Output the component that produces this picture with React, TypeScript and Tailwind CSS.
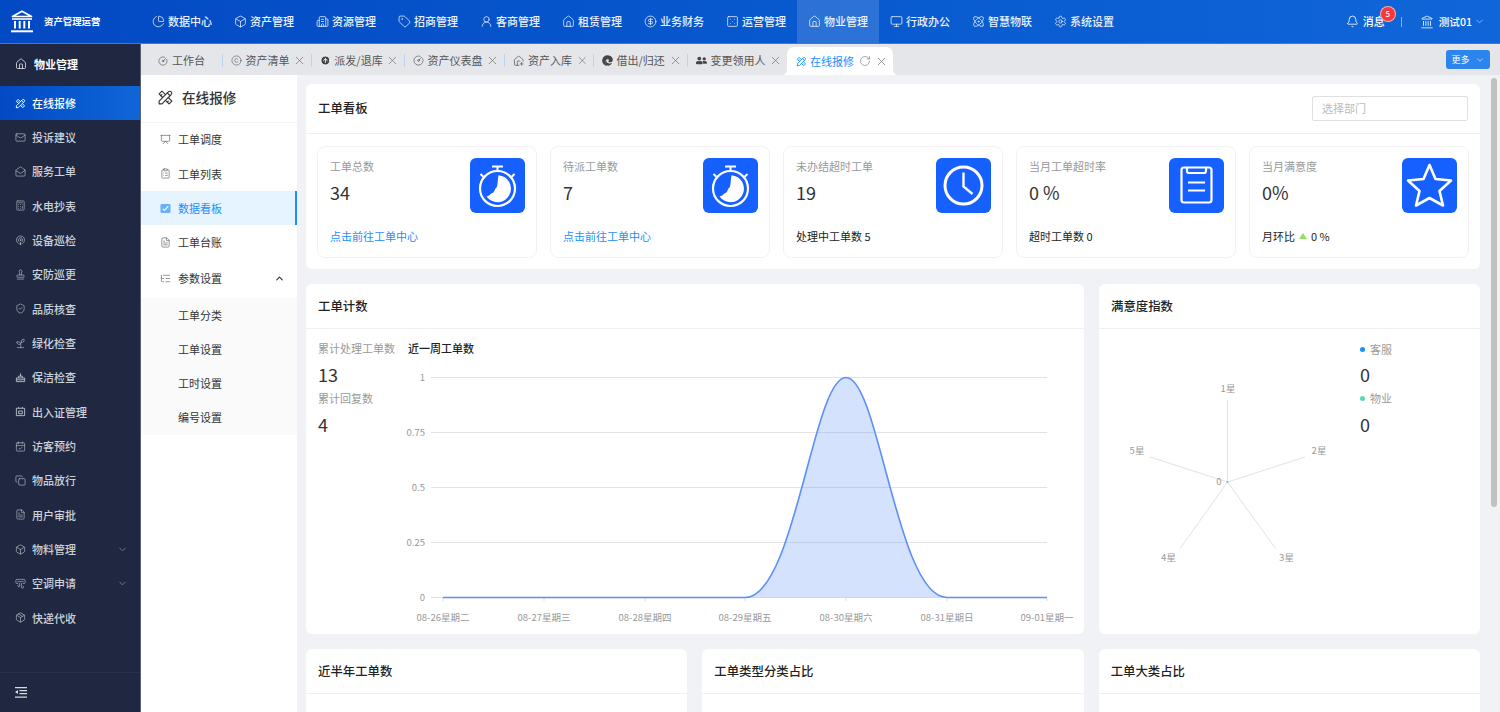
import React from 'react';
import {
  AirVent, Atom, Bell, Box, Building2, Calculator, CalendarCheck, ChevronDown, ChevronUp, ChartPie, CircleArrowUp,
  CircleDollarSign, CircleGauge, ClipboardList, Copy, Copyright, Dice5, FileText, House, HousePlus, Landmark, ListTree,
  Mail, MailOpen, Monitor, Package, Podcast, Presentation, RotateCw, Settings, ShieldCheck, Sprout, Stamp, Tag,
  UserRound, X,
} from 'lucide-react';
import { TbTools } from 'react-icons/tb';
import { FaEdge, FaUserFriends } from 'react-icons/fa';

type IconProps = { size?: number; strokeWidth?: number; className?: string };

const BroomBox = ({ size = 11, className }: IconProps) => (
  <svg viewBox="0 0 12 12" width={size} height={size} fill="none" stroke="currentColor" strokeWidth="1" className={className}>
    <path d="M1.5 6.5h9v4h-9zM4 6.5V4.5h4v2M6 4.5V1.5M1.5 8.5h9" />
  </svg>
);

const PassIcon = ({ size = 11, className }: IconProps) => (
  <svg viewBox="0 0 12 12" width={size} height={size} fill="none" stroke="currentColor" strokeWidth="1" className={className}>
    <path d="M1.5 2.5h9v8h-9zM4 2.5V1M8 2.5V1M4 5.5h4v3H4z" />
  </svg>
);

const BoardIcon = ({ size = 11, className }: IconProps) => (
  <svg viewBox="0 0 12 12" width={size} height={size} className={className}>
    <rect x="0.5" y="1" width="11" height="10" rx="1.5" fill="#69b1ff" />
    <path d="M3 6.5L5 8L9 3.5" fill="none" stroke="#fff" strokeWidth="1.2" />
  </svg>
);

const navItems = [
  { label: '数据中心', icon: ChartPie },
  { label: '资产管理', icon: Box },
  { label: '资源管理', icon: Building2 },
  { label: '招商管理', icon: Tag },
  { label: '客商管理', icon: UserRound },
  { label: '租赁管理', icon: House },
  { label: '业务财务', icon: CircleDollarSign },
  { label: '运营管理', icon: Dice5 },
  { label: '物业管理', icon: House, active: true },
  { label: '行政办公', icon: Monitor },
  { label: '智慧物联', icon: Atom },
  { label: '系统设置', icon: Settings },
];

const sideItems = [
  { label: '投诉建议', icon: Mail },
  { label: '服务工单', icon: MailOpen },
  { label: '水电抄表', icon: Calculator },
  { label: '设备巡检', icon: Podcast },
  { label: '安防巡更', icon: Stamp },
  { label: '品质核查', icon: ShieldCheck },
  { label: '绿化检查', icon: Sprout },
  { label: '保洁检查', icon: BroomBox },
  { label: '出入证管理', icon: PassIcon },
  { label: '访客预约', icon: CalendarCheck },
  { label: '物品放行', icon: Copy },
  { label: '用户审批', icon: FileText },
  { label: '物料管理', icon: Box, more: true },
  { label: '空调申请', icon: AirVent, more: true },
  { label: '快递代收', icon: Package },
];

const tabs = [
  { label: '资产清单', icon: <Copyright size={11} strokeWidth={1.3} />, w: 'w-[89px]' },
  { label: '派发/退库', icon: <CircleArrowUp size={11} fill="#444" stroke="#fff" strokeWidth={2} />, w: 'w-[93px]' },
  { label: '资产仪表盘', icon: <CircleGauge size={11} strokeWidth={1.4} />, w: 'w-[100px]' },
  { label: '资产入库', icon: <HousePlus size={12} strokeWidth={1.5} />, w: 'w-[89px]' },
  { label: '借出/归还', icon: <FaEdge size={11} color="#444" />, w: 'w-[94px]' },
  { label: '变更领用人', icon: <FaUserFriends size={11} color="#444" />, w: 'w-[100px]' },
];

const subMenu = [
  { label: '工单调度', icon: Presentation },
  { label: '工单列表', icon: ClipboardList },
  { label: '数据看板', icon: BoardIcon, active: true },
  { label: '工单台账', icon: FileText },
];

const Logo = () => (
  <svg viewBox="0 0 24 23" className="w-[24px] h-[23px]" fill="none" stroke="#fff">
    <path d="M12 1.2L21.5 6.5H2.5Z" strokeWidth="1.7" strokeLinejoin="round" />
    <path d="M2 9H22" strokeWidth="1.6" />
    <path d="M5 11V18.5M9.7 11V18.5M14.3 11V18.5M19 11V18.5" strokeWidth="2" />
    <path d="M1 21.3H23" strokeWidth="2" />
  </svg>
);

const Stopwatch = () => (
  <svg viewBox="0 0 55 55" className="w-[55px] h-[55px]">
    <circle cx="27.5" cy="30.5" r="17.5" fill="none" stroke="#fff" strokeWidth="2.2" />
    <path d="M22 8.5h11M27.5 8.5v4M10.5 16l2.8 2.8M44.5 16l-2.8 2.8" stroke="#fff" strokeWidth="2" fill="none" />
    <path d="M28.5 17.2A13.5 13.5 0 1 1 16.5 38.5C19 38.5 20.5 35.5 22.5 35C24.5 34 24.5 31 26.5 29.5C28 27 27.5 22 28.5 17.2Z" fill="#fff" />
  </svg>
);

const ClockIcon = () => (
  <svg viewBox="0 0 55 55" className="w-[55px] h-[55px]">
    <circle cx="27.5" cy="27.5" r="18.5" fill="none" stroke="#fff" strokeWidth="3" />
    <path d="M27.5 14.5V28.5L36.5 36" fill="none" stroke="#fff" strokeWidth="2.4" />
  </svg>
);

const ClipIcon = () => (
  <svg viewBox="0 0 55 55" className="w-[55px] h-[55px]">
    <rect x="12.5" y="9.5" width="30" height="35" rx="2.5" fill="none" stroke="#fff" strokeWidth="2.2" />
    <path d="M18 9.5V13Q18 15 20 15H35Q37 15 37 13V9.5M19 24.5H36M19 32.5H36" fill="none" stroke="#fff" strokeWidth="2.2" />
  </svg>
);

const StarIcon = () => (
  <svg viewBox="0 0 55 55" className="w-[55px] h-[55px]">
    <path d="M27.5 7L33.5 21L49 22.5L37.5 33L41 47.5L27.5 40L14 47.5L17.5 33L6 22.5L21.5 21Z" fill="none" stroke="#fff" strokeWidth="2.6" strokeLinejoin="round" />
  </svg>
);

const link = '点击前往工单中心';

const stats = [
  { label: '工单总数', value: '34', icon: <Stopwatch />, foot: <span className="text-[#1890ff]">{link}</span> },
  { label: '待派工单数', value: '7', icon: <Stopwatch />, foot: <span className="text-[#1890ff]">{link}</span> },
  { label: '未办结超时工单', value: '19', icon: <ClockIcon />, foot: <span className="text-[#222]">处理中工单数 5</span> },
  { label: '当月工单超时率', value: '0 %', icon: <ClipIcon />, foot: <span className="text-[#222]">超时工单数 0</span> },
  {
    label: '当月满意度', value: '0%', icon: <StarIcon />,
    foot: (
      <span className="flex items-center text-[#222]">
        月环比
        <svg viewBox="0 0 8 6" className="w-[8px] h-[6px] mx-[4px]"><path d="M4 0L8 6H0Z" fill="#95de64" /></svg>
        0 %
      </span>
    ),
  },
];

const PanelHead = ({ title, tall, children }: { title: string; tall?: boolean; children?: React.ReactNode }) => (
  <div className={`flex items-center justify-between px-[12px] border-b border-[#f0f0f0] ${tall ? 'h-[50px]' : 'h-[45px]'}`}>
    <span className="text-[12.4px] font-medium text-[#222]">{title}</span>
    {children}
  </div>
);

const yTicks = [
  { y: 377, t: '1' },
  { y: 432, t: '0.75' },
  { y: 487, t: '0.5' },
  { y: 542, t: '0.25' },
  { y: 597, t: '0' },
];

const xTicks = [
  { x: 443, t: '08-26星期二' },
  { x: 544, t: '08-27星期三' },
  { x: 645, t: '08-28星期四' },
  { x: 745, t: '08-29星期五' },
  { x: 846, t: '08-30星期六' },
  { x: 947, t: '08-31星期日' },
  { x: 1047, t: '09-01星期一' },
];

// 图表坐标直接按页面像素算，viewBox 从面板左上角开始
const LineChart = () => (
  <svg viewBox="400 360 684 270" className="w-[684px] h-[270px] mt-[4px]">
    {yTicks.map((l) => (
      <g key={l.t}>
        <line x1="431" x2="1047" y1={l.y + 0.5} y2={l.y + 0.5} stroke="#e3e3e3" />
        <text x="425" y={l.y + 3.5} textAnchor="end" fontSize="9.5" fill="#999">{l.t}</text>
      </g>
    ))}
    {xTicks.map((l) => (
      <g key={l.t}>
        <line x1={l.x} x2={l.x} y1="598" y2="601" stroke="#ddd" />
        <text x={l.x} y="621" textAnchor="middle" fontSize="9.5" fill="#999">{l.t}</text>
      </g>
    ))}
    <path d="M745 597.5C795 597.5 813 377.5 846 377.5C879 377.5 897 597.5 947 597.5Z" fill="#5b8ff9" fillOpacity="0.26" />
    <path d="M443 597.5H745C795 597.5 813 377.5 846 377.5C879 377.5 897 597.5 947 597.5H1047" fill="none" stroke="#5b8ff9" strokeWidth="1.6" />
  </svg>
);

const radarLabels = [
  { x: 1228, y: 391, t: '1星', ex: 1227.5, ey: 399 },
  { x: 1319, y: 453, t: '2星', ex: 1305, ey: 456 },
  { x: 1286.5, y: 560, t: '3星', ex: 1275.7, ey: 547.7 },
  { x: 1168.5, y: 560, t: '4星', ex: 1180, ey: 547.7 },
  { x: 1137, y: 453, t: '5星', ex: 1150, ey: 456 },
];

const Radar = () => (
  <svg viewBox="1100 370 240 200" className="w-[240px] h-[200px]">
    {radarLabels.map((l) => (
      <g key={l.t}>
        <line x1="1227.5" y1="481" x2={l.ex} y2={l.ey} stroke="#e2e2e2" />
        <text x={l.x} y={l.y} textAnchor="middle" fontSize="9.5" fill="#999">{l.t}</text>
      </g>
    ))}
    <text x="1219" y="484" textAnchor="middle" fontSize="9.5" fill="#999">0</text>
    <circle cx="1227.5" cy="481" r="1" fill="#5ad8a6" />
  </svg>
);

const App: React.FC = () => {
  return (
    <div className="h-screen flex flex-col overflow-hidden relative text-[11px] text-[#333] font-['Noto_Sans_CJK_SC','Noto_Sans',sans-serif]">
      {/* 顶部导航 */}
      <header className="h-[44px] shrink-0 flex items-center bg-gradient-to-r from-[#0349c3] to-[#1066d8] border-b border-[#2f7de6] text-white">
        <div className="w-[141px] flex items-center shrink-0 pl-[10px]">
          <Logo />
          <span className="ml-[10px] text-[9.4px] font-bold">资产管理运营</span>
        </div>
        <nav className="flex h-full">
          {navItems.map((n) => (
            <div key={n.label} className={`w-[82px] flex items-center justify-center gap-[3px] ${n.active ? 'bg-white/15' : ''}`}>
              <n.icon size={13} strokeWidth={1.3} />
              <span className="font-medium text-[#eaf1fc]">{n.label}</span>
            </div>
          ))}
        </nav>
        <div className="ml-auto flex items-center pr-[15px]">
          <Bell size={13} strokeWidth={1.5} />
          <div className="relative ml-[4px] font-medium">
            消息
            <span className="absolute -top-[7px] left-[17px] w-[16px] h-[16px] rounded-full bg-[#f5383b] border border-white/60 flex items-center justify-center text-[8px]">5</span>
          </div>
          <span className="ml-[16px] w-px h-[10px] bg-white/50" />
          <Landmark size={14} strokeWidth={1.4} className="ml-[18px]" />
          <span className="ml-[5px] font-medium text-[10.6px]">测试01</span>
          <ChevronDown size={11} strokeWidth={1.5} className="ml-[2px] text-white/70" />
        </div>
      </header>

      <div className="flex-1 flex min-h-0">
        {/* 左侧一级菜单 */}
        <aside className="w-[141px] shrink-0 flex flex-col bg-[#1f2840] border-r border-[#5a6272] text-[#ccd1da]">
          <div className="h-[42px] pb-[2px] flex items-center pl-[15px] gap-[7px] text-white font-bold">
            <House size={12} strokeWidth={1.4} />
            物业管理
          </div>
          <div className="h-[34px] flex items-center pl-[15px] gap-[6px] text-white font-medium bg-gradient-to-r from-[#0349c3] to-[#1066d8]">
            <TbTools size={11} />
            在线报修
          </div>
          {sideItems.map((s) => (
            <div key={s.label} className="h-[34.35px] shrink-0 flex items-center pl-[15px] pr-[12px] gap-[6px] font-medium">
              <s.icon size={11} strokeWidth={1.4} className="text-[#b9bfca]" />
              {s.label}
              {s.more && <ChevronDown size={11} className="ml-auto text-[#77808f]" />}
            </div>
          ))}
          <div className="mt-auto h-[40px] flex items-center pl-[15px] border-t border-[#283149]">
            <svg viewBox="0 0 12 11" className="w-[12px] h-[11px]" fill="#d5d9e0">
              <path d="M0 0h12v1.2H0zM4.5 3h7.5v1.2H4.5zM4.5 6h7.5v1.2H4.5zM0 9.6h12v1.2H0zM3 3v4L0 5z" />
            </svg>
          </div>
        </aside>

        <div className="flex-1 flex flex-col min-w-0">
          {/* 标签页 */}
          <div className="h-[31px] shrink-0 flex items-end bg-[#e4e6e9] relative text-[#555]">
            <div className="h-[27px] w-[81px] flex items-center pl-[17px] gap-[4px] mb-[1px]">
              <CircleGauge size={10} strokeWidth={1.5} />
              工作台
            </div>
            {tabs.map((t) => (
              <div key={t.label} className={`${t.w} h-[27px] mb-[1px] flex items-center pl-[9px] pr-[5px] gap-[3.5px] relative before:content-[''] before:absolute before:left-0 before:top-[7px] before:h-[13px] before:w-px before:bg-[#bfd3ee]`}>
                {t.icon}
                <span className="whitespace-nowrap">{t.label}</span>
                <X size={13} strokeWidth={1.4} className="ml-auto text-[#777]" />
              </div>
            ))}
            <div className="relative h-[28px] w-[106px] bg-white rounded-t-[7px] flex items-center pl-[9px] pr-[5px] gap-[3px] text-[#1890ff]">
              <svg viewBox="0 0 6 6" className="absolute -left-[6px] bottom-0 w-[6px] h-[6px]"><path d="M6 0V6H0Q6 6 6 0Z" fill="#fff" /></svg>
              <svg viewBox="0 0 6 6" className="absolute -right-[6px] bottom-0 w-[6px] h-[6px]"><path d="M0 0V6H6Q0 6 0 0Z" fill="#fff" /></svg>
              <TbTools size={11} />
              在线报修
              <RotateCw size={12} strokeWidth={1.1} className="ml-[2px] text-[#666]" />
              <X size={13} strokeWidth={1.4} className="ml-auto text-[#777]" />
            </div>
            <div className="absolute right-[10px] top-[6px] w-[44px] h-[19px] rounded-[3px] bg-[#2b85ec] text-white text-[9px] flex items-center justify-center gap-[5px]">
              更多
              <ChevronDown size={10} className="text-white/70" />
            </div>
          </div>

          <div className="flex-1 flex min-h-0">
            {/* 二级菜单 */}
            <div className="w-[156px] shrink-0 bg-white flex flex-col">
              <div className="h-[47.5px] shrink-0 pb-[2px] flex items-center pl-[16px] gap-[8px] border-b border-[#f3f3f3] text-[13.6px] font-medium text-[#333]">
                <TbTools size={17} strokeWidth={1.6} />
                在线报修
              </div>
              {subMenu.map((m) => (
                <div key={m.label} className={`h-[34.3px] flex items-center pl-[19px] gap-[7px] ${m.active ? 'bg-[#e6f4ff] text-[#1890ff] border-r-2 border-[#1890ff]' : ''}`}>
                  <m.icon size={11} strokeWidth={1.5} className={m.active ? 'text-[#69b1ff]' : 'text-[#666]'} />
                  {m.label}
                </div>
              ))}
              <div className="h-[38px] flex items-center pl-[19px] pr-[12px] gap-[7px]">
                <ListTree size={11} strokeWidth={1.5} className="text-[#666]" />
                参数设置
                <ChevronUp size={11} strokeWidth={2.5} className="ml-auto" />
              </div>
              <div className="bg-[#fafafa]">
                {['工单分类', '工单设置', '工时设置', '编号设置'].map((s) => (
                  <div key={s} className="h-[34.3px] flex items-center pl-[37px]">{s}</div>
                ))}
              </div>
            </div>

            {/* 内容区 */}
            <main className="flex-1 min-w-0 overflow-hidden bg-[#f0f2f5] pl-[9px] pr-[20px] pt-[9px] flex flex-col gap-[15px]">
              <section className="bg-white rounded-[6px] shrink-0">
                <PanelHead title="工单看板" tall>
                  <div className="w-[156px] h-[25px] border border-[#e0e0e0] rounded-[2px] flex items-center pl-[9px] text-[#bbb]">选择部门</div>
                </PanelHead>
                <div className="grid grid-cols-5 gap-[13px] px-[11px] pt-[12px] pb-[11px]">
                  {stats.map((s) => (
                    <div key={s.label} className="h-[112px] rounded-[8px] border border-[#f2f2f2] pl-[12px] pr-[11px] pt-[11px] flex flex-col relative">
                      <div className="flex justify-between">
                        <div>
                          <div className="text-[#999] leading-[16px]">{s.label}</div>
                          <div className="text-[18px] leading-[24px] mt-[6px] text-[#333]">{s.value}</div>
                        </div>
                        <div className="w-[55px] h-[55px] rounded-[6px] bg-[#1660ff] shrink-0">{s.icon}</div>
                      </div>
                      <div className="mt-auto mb-[13px] leading-[16px]">{s.foot}</div>
                    </div>
                  ))}
                </div>
              </section>

              <div className="flex gap-[15px] shrink-0">
                <section className="w-[778px] h-[350px] bg-white rounded-[6px]">
                  <PanelHead title="工单计数" />
                  <div className="flex">
                    <div className="w-[102px] pl-[12px] pt-[11px] shrink-0">
                      <div className="text-[#999] leading-[16px] whitespace-nowrap">累计处理工单数</div>
                      <div className="text-[18px] leading-[24px] mt-[6px]">13</div>
                      <div className="text-[#999] leading-[16px] mt-[4px]">累计回复数</div>
                      <div className="text-[18px] leading-[24px] mt-[6px]">4</div>
                    </div>
                    <div className="pt-[11px] -ml-[8px] flex flex-col">
                      <div className="pl-[8px] leading-[16px] font-medium text-[#222]">近一周工单数</div>
                      <LineChart />
                    </div>
                  </div>
                </section>
                <section className="flex-1 h-[350px] bg-white rounded-[6px]">
                  <PanelHead title="满意度指数" />
                  <div className="flex">
                    <div className="w-[261px] pt-[42px] pl-[1px] shrink-0"><Radar /></div>
                    <div className="pt-[12px]">
                      <div className="flex items-center gap-[5px] text-[#999] leading-[16px]">
                        <span className="w-[5px] h-[5px] rounded-full bg-[#1890ff]" />
                        客服
                      </div>
                      <div className="text-[18px] leading-[24px] mt-[5px]">0</div>
                      <div className="flex items-center gap-[5px] text-[#999] leading-[16px] mt-[4px]">
                        <span className="w-[5px] h-[5px] rounded-full bg-[#5ad8a6]" />
                        物业
                      </div>
                      <div className="text-[18px] leading-[24px] mt-[6px]">0</div>
                    </div>
                  </div>
                </section>
              </div>

              <div className="flex gap-[15px] shrink-0">
                {['近半年工单数', '工单类型分类占比', '工单大类占比'].map((t) => (
                  <section key={t} className="flex-1 h-[300px] bg-white rounded-[6px]">
                    <PanelHead title={t} />
                  </section>
                ))}
              </div>
            </main>
          </div>
        </div>
      </div>
      <div className="absolute right-[3px] top-[78px] w-[6px] h-[429px] rounded-full bg-[#c1c1c1]" />
    </div>
  );
};

export default App;
